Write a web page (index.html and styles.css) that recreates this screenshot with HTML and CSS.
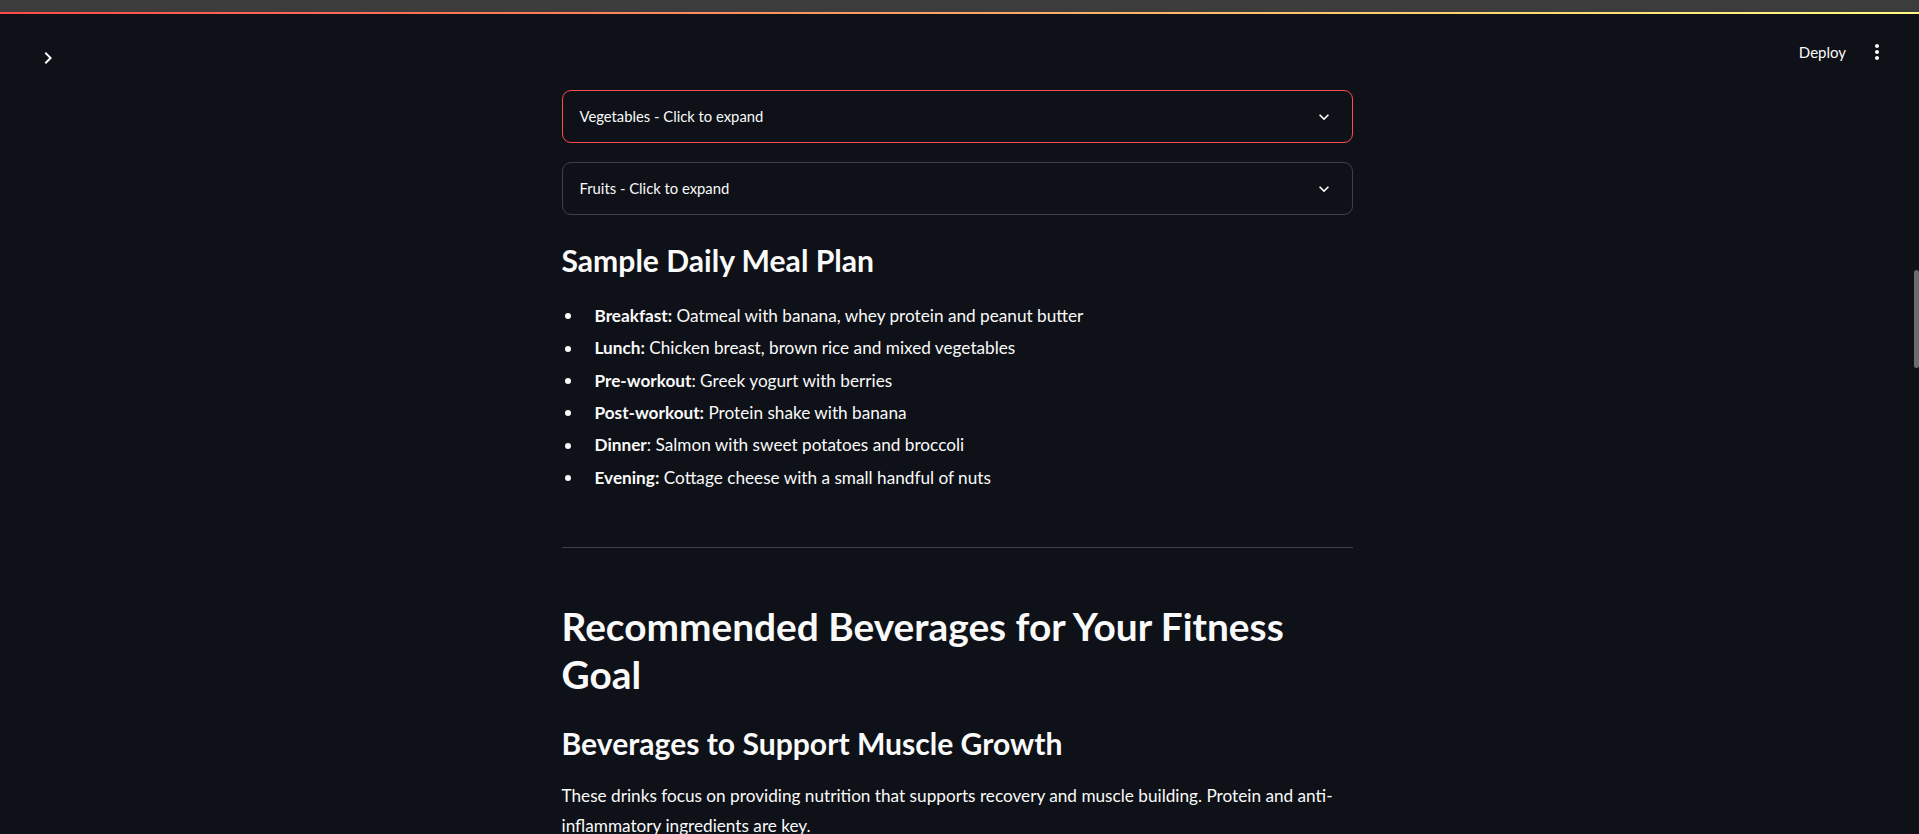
FILE: index.html
```html
<!DOCTYPE html>
<html lang="en">
<head>
<meta charset="utf-8">
<title>Fitness Nutrition</title>
<link rel="stylesheet" href="styles.css">
</head>
<body>
<div class="topbar"></div>
<div class="decoration"></div>
<div class="app">
  <header class="header">
    <button class="sidebar-toggle" aria-label="Open sidebar">
      <svg viewBox="0 0 24 24" width="24" height="24"><path fill="#fafafa" d="M10 6L8.59 7.41 13.17 12l-4.58 4.59L10 18l6-6z"/></svg>
    </button>
    <div class="actions">
      <span class="deploy">Deploy</span>
      <svg class="kebab" viewBox="0 0 24 24" width="24" height="24"><path fill="#fafafa" d="M12 8c1.1 0 2-.9 2-2s-.9-2-2-2-2 .9-2 2 .9 2 2 2zm0 2c-1.1 0-2 .9-2 2s.9 2 2 2 2-.9 2-2-.9-2-2-2zm0 6c-1.1 0-2 .9-2 2s.9 2 2 2 2-.9 2-2-.9-2-2-2z"/></svg>
    </div>
  </header>
  <main class="main">
    <details class="expander focused">
      <summary class="summary"><span>Vegetables - Click to expand</span>
        <svg class="chev" viewBox="0 0 24 24" width="20" height="20"><path fill="#fafafa" d="M16.59 8.59L12 13.17 7.41 8.59 6 10l6 6 6-6z"/></svg>
      </summary>
    </details>
    <details class="expander">
      <summary class="summary"><span>Fruits - Click to expand</span>
        <svg class="chev" viewBox="0 0 24 24" width="20" height="20"><path fill="#fafafa" d="M16.59 8.59L12 13.17 7.41 8.59 6 10l6 6 6-6z"/></svg>
      </summary>
    </details>

    <h3 class="h3 h3-first">Sample Daily Meal Plan</h3>
    <ul class="plan">
      <li><span><b>Breakfast:</b> Oatmeal with banana, whey protein and peanut butter</span></li>
      <li><span><b>Lunch:</b> Chicken breast, brown rice and mixed vegetables</span></li>
      <li><span><b>Pre-workout</b>: Greek yogurt with berries</span></li>
      <li><span><b>Post-workout:</b> Protein shake with banana</span></li>
      <li><span><b>Dinner</b>: Salmon with sweet potatoes and broccoli</span></li>
      <li><span><b>Evening:</b> Cottage cheese with a small handful of nuts</span></li>
    </ul>

    <hr class="divider">

    <h2 class="h2">Recommended Beverages for Your Fitness Goal</h2>
    <h3 class="h3 h3-sub">Beverages to Support Muscle Growth</h3>
    <p class="para">These drinks focus on providing nutrition that supports recovery and muscle building. Protein and anti-inflammatory ingredients are key.</p>
  </main>
</div>
<div class="scroll-thumb"></div>
</body>
</html>
```

FILE: styles.css
```css
html, body {
  margin: 0;
  padding: 0;
  background: #0e1117;
  color: #fafafa;
  font-family: "Lato", "Liberation Sans", sans-serif;
  overflow: hidden;
}

.topbar {
  height: 12px;
  background: #3c3c3c;
}

.decoration {
  height: 2px;
  background: linear-gradient(90deg, #ff4b4b, #fffd80);
}

.app {
  padding-right: 5px;
}

.header {
  display: flex;
  justify-content: space-between;
  align-items: flex-start;
  height: 76px;
  padding: 0 25px 0 36px;
  box-sizing: border-box;
}

.sidebar-toggle {
  margin-top: 32px;
  width: 24px;
  height: 24px;
  padding: 0;
  border: 0;
  background: transparent;
  display: flex;
}

.actions {
  display: flex;
  align-items: center;
  gap: 19px;
  height: 24px;
  margin-top: 26px;
}

.deploy {
  font-size: 15px;
  line-height: 24px;
}

.kebab {
  display: block;
}

.main {
  width: 791px;
  margin: 0 auto;
  padding-bottom: 120px;
}

.expander {
  border: 1px solid rgba(250, 250, 250, 0.2);
  border-radius: 9px;
}

.expander + .expander {
  margin-top: 19px;
}

.expander.focused {
  border-color: #ff4b4b;
}

.summary {
  list-style: none;
  display: flex;
  justify-content: space-between;
  align-items: center;
  padding: 13px 18px 13px 17px;
  font-size: 14.8px;
  line-height: 25px;
  cursor: pointer;
}

.summary::-webkit-details-marker {
  display: none;
}

.chev {
  display: block;
}

.h3 {
  font-size: 30.1px;
  line-height: 37.8px;
  font-weight: 700;
  margin: 0;
}

.h3-first {
  margin-top: 27px;
}

.plan {
  list-style: none;
  margin: 22px 0 0;
  padding: 0;
}

.plan li {
  display: flex;
  align-items: center;
  font-size: 17.2px;
  line-height: 28.8px;
  margin-bottom: 3.6px;
}

.plan li::before {
  content: "";
  flex: none;
  width: 6px;
  height: 6px;
  border-radius: 50%;
  background: #fafafa;
  margin: 0 24px 0 3px;
}

.plan b {
  font-weight: 700;
}

.divider {
  margin: 54.5px 0 0;
  border: 0;
  border-top: 1px solid rgba(250, 250, 250, 0.2);
}

.h2 {
  font-size: 38.8px;
  line-height: 47.7px;
  font-weight: 700;
  margin: 55px 0 0;
}

.h3-sub {
  margin-top: 27px;
}

.para {
  font-size: 17.2px;
  line-height: 29.4px;
  margin: 18px 0 0;
}

.scroll-thumb {
  position: fixed;
  right: 0;
  top: 270px;
  width: 5px;
  height: 98px;
  border-radius: 3px;
  background: #6b6c70;
}
```
